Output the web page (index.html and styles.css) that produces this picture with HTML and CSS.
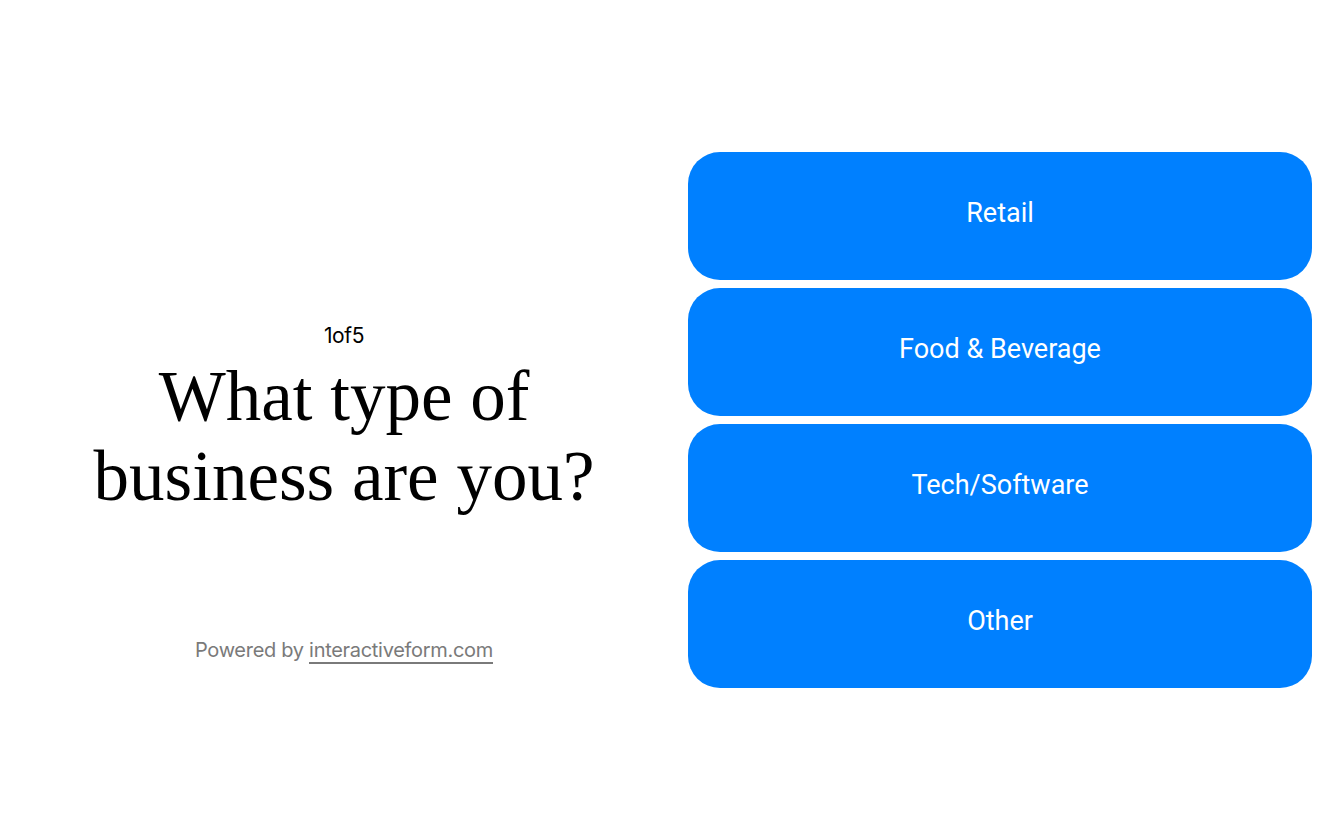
FILE: index.html
```html
<!DOCTYPE html>
<html lang="en">
<head>
    <meta charset="UTF-8">
    <meta name="viewport" content="width=device-width, initial-scale=1.0">
    <title>What type of business are you?</title>
    <link rel="stylesheet" href="styles.css">
</head>
<body>
    <div class="form">
        <section class="question">
            <div class="spacer"></div>
            <div class="question-body">
                <div class="step">1of5</div>
                <h1>What type of business are you?</h1>
            </div>
            <div class="powered">
                Powered by <a href="#">interactiveform.com</a>
            </div>
        </section>
        <section class="choices">
            <button class="choice">Retail</button>
            <button class="choice">Food &amp; Beverage</button>
            <button class="choice">Tech/Software</button>
            <button class="choice">Other</button>
        </section>
    </div>
</body>
</html>
```

FILE: styles.css
```css
:root {
    --blue: #0080ff;
    --gray: #7a7a7a;
}

* {
    box-sizing: border-box;
    margin: 0;
    padding: 0;
}

body {
    font-family: Inter, 'Liberation Sans', sans-serif;
    background: #fff;
    color: #000;
}

.form {
    display: grid;
    grid-template-columns: 1fr 1fr;
    gap: 32px;
    padding: 0 32px;
    height: 840px;
    align-items: center;
}

.question {
    display: grid;
    grid-template-rows: 1fr auto 1fr;
    height: 536px;
    text-align: center;
}

.step {
    font-size: 21px;
    letter-spacing: -0.4px;
    line-height: 24px;
    margin-bottom: 8px;
}

h1 {
    font-family: 'Liberation Serif', serif;
    font-weight: 400;
    font-size: 71px;
    line-height: 80px;
}

.powered {
    align-self: end;
    margin-bottom: 26px;
    font-size: 20px;
    letter-spacing: -0.3px;
    color: var(--gray);
}

.powered a {
    color: var(--gray);
    text-decoration: none;
    border-bottom: 2px solid var(--gray);
}

.choices {
    display: flex;
    flex-direction: column;
    gap: 8px;
}

.choice {
    height: 128px;
    padding-bottom: 6px;
    border: none;
    border-radius: 32px;
    background: var(--blue);
    color: #fff;
    font-family: Roboto, 'Liberation Sans', sans-serif;
    font-size: 27px;
    cursor: pointer;
}
```
